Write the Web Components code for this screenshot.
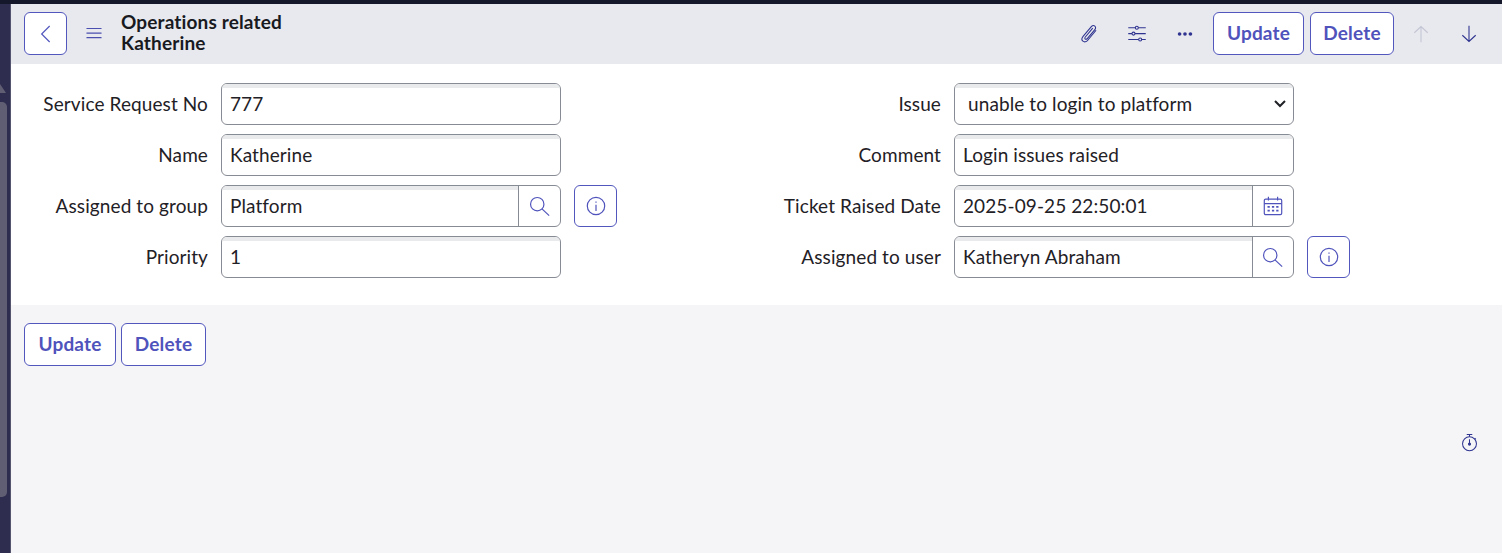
<!DOCTYPE html>
<html lang="en">
<head>
<meta charset="utf-8">
<title>Operations related Katherine</title>
<style>
  html, body { margin: 0; height: 100%; }
  body { font-family: Lato, "Liberation Sans", sans-serif; background: #f5f5f8; overflow: hidden; }
</style>
</head>
<body>
<app-shell>
  <form-header slot="header" heading="Operations related" sub="Katherine">
    <icon-button icon="clip"></icon-button>
    <icon-button icon="sliders"></icon-button>
    <icon-button icon="dots"></icon-button>
    <action-button class="first" style="width:91px">Update</action-button>
    <action-button class="second" style="width:84px">Delete</action-button>
    <icon-button icon="up" class="off"></icon-button>
    <icon-button icon="down"></icon-button>
  </form-header>
  <form-grid slot="form">
    <form-field label="Service Request No">777</form-field>
    <form-field label="Issue" type="select">unable to login to platform</form-field>
    <form-field label="Name">Katherine</form-field>
    <form-field label="Comment">Login issues raised</form-field>
    <form-field label="Assigned to group" addon="search" info>Platform</form-field>
    <form-field label="Ticket Raised Date" addon="calendar" class="narrow">2025-09-25 22:50:01</form-field>
    <form-field label="Priority">1</form-field>
    <form-field label="Assigned to user" addon="search" info class="narrow">Katheryn Abraham</form-field>
  </form-grid>
  <form-footer slot="footer">
    <action-button style="width:92px">Update</action-button>
    <action-button style="width:85px">Delete</action-button>
  </form-footer>
</app-shell>

<script>
// Iconos en linea, todos sobre una caja de 24x24
const ICONS = {
  back: '<path d="M16 3.250 7.250 12 16 20.750"/>',
  menu: '<path d="M3.800 6h16.400M3.800 11h16.400M3.800 16h16.400"/>',
  clip: '<path d="M20.500 7.500 10.500 19.500c-1.800 2.100-4.200 2.500-5.800 1.100-1.600-1.300-1.500-3.700.2-5.800L14.800 3.200c1.200-1.400 3-1.700 4.200-.7 1.200 1 1.200 2.800 0 4.200L9.900 17.500c-.7.800-1.700 1-2.400.5-.7-.6-.6-1.600.1-2.400L16.500 5"/>',
  sliders: '<path d="M1.500 4.500h8.500M13.500 4.500h9M1.500 11.500h4.500M9.500 11.500h13M1.500 18.500h12.500M17.500 18.500h5"/><circle cx="11.800" cy="4.500" r="1.800"/><circle cx="7.800" cy="11.500" r="1.800"/><circle cx="15.800" cy="18.500" r="1.800"/>',
  dots: '<circle cx="5.500" cy="12" r="2.200" fill="currentColor" stroke="none"/><circle cx="12" cy="12" r="2.200" fill="currentColor" stroke="none"/><circle cx="18.500" cy="12" r="2.200" fill="currentColor" stroke="none"/>',
  up: '<path d="M12 22V3M4 10.500 12 3l8 7.500"/>',
  down: '<path d="M12 2v19M4 13.500 12 21l8-7.500"/>',
  search: '<circle cx="9" cy="10" r="7.300"/><path d="m14.200 15.200 7.800 7.300"/>',
  info: '<circle cx="12" cy="12" r="9.500"/><path d="M12 10.500v7M12 7v1.500"/>',
  calendar: '<rect x="2.500" y="4.500" width="19" height="17" rx="1.500"/><path d="M2.500 9.500h19M7 2v4M17 2v4"/><path stroke-width="2" d="M6 13h2.500M10.800 13h2.500M15.500 13h2.500M6 17h2.500M10.800 17h2.500M15.500 17h2.500"/>',
  timer: '<circle cx="12" cy="13.500" r="8.800"/><path d="M8.500 1.800h7M12 1.800v3M12 8v5.500"/><circle cx="12" cy="14" r="1.300" fill="currentColor"/><path d="m18.500 6.500 1.500 1.500"/>'
};

function svg(name, size) {
  return `<svg width="${size}" height="${size}" viewBox="0 0 24 24" fill="none" stroke="currentColor" stroke-width="1.300">${ICONS[name]}</svg>`;
}

// Marco de la pagina: tira oscura a la izquierda y barra superior
class AppShell extends HTMLElement {
  constructor() {
    super();
    this.attachShadow({ mode: "open" }).innerHTML = `
      <style>
        :host { display: flex; height: 553px; flex-direction: column; }
        .top { height: 4px; background: #15172b; flex: none; }
        .body { display: flex; flex: 1; min-height: 0; position: relative; }
        .rail { width: 11px; box-sizing: border-box; flex: none; background: #2e2d50; border-right: 1px solid #55546f; padding-top: 98px; }
        .thumb { width: 7px; height: 395px; background: #605e73; border-radius: 0 5px 5px 0; }
        .peak { width: 0; height: 0; border-style: solid; border-width: 0 6px 9px 0; border-color: transparent transparent #605e73 transparent; position: absolute; top: 80px; left: 0; }
        main { flex: 1; min-width: 0; display: flex; flex-direction: column; }
        .timer { position: absolute; left: 1460px; top: 429px; color: #2f3490; line-height: 0; }
      </style>
      <div class="top"></div>
      <div class="body">
        <div class="rail"><div class="peak"></div><div class="thumb"></div></div>
        <main>
          <slot name="header"></slot>
          <slot name="form"></slot>
          <slot name="footer"></slot>
        </main>
        <div class="timer">${svg("timer", 19)}</div>
      </div>`;
  }
}

// Cabecera con titulo de dos lineas y acciones
class FormHeader extends HTMLElement {
  constructor() {
    super();
    this.attachShadow({ mode: "open" }).innerHTML = `
      <style>
        :host { display: flex; align-items: flex-start; height: 60px; background: #e8e9ee; padding: 8px 9px 0 13px; box-sizing: border-box; }
        .back { width: 43px; height: 43px; box-sizing: border-box; background: #fff; border: 1px solid #5257bd; border-radius: 6px; color: #5257bd; display: flex; align-items: center; justify-content: center; }
        .menu { width: 54px; height: 43px; display: flex; align-items: center; justify-content: center; color: #4a4fb0; }
        h1 { margin: -1px 0 0; font: 700 19px/21px Lato, sans-serif; letter-spacing: .15px; color: #181a1f; }
        .actions { margin-left: auto; display: flex; align-items: center; }
      </style>
      <div class="back">${svg("back", 22)}</div>
      <div class="menu">${svg("menu", 22)}</div>
      <h1></h1>
      <div class="actions"><slot></slot></div>`;
  }
  connectedCallback() {
    const h = this.shadowRoot.querySelector("h1");
    h.innerHTML = `${this.getAttribute("heading")}<br>${this.getAttribute("sub")}`;
  }
}

class IconButton extends HTMLElement {
  constructor() {
    super();
    this.attachShadow({ mode: "open" });
  }
  connectedCallback() {
    this.shadowRoot.innerHTML = `
      <style>
        :host { display: flex; width: 48px; height: 43px; align-items: center; justify-content: center; color: #2f3490; }
        :host(.off) { color: #c3c5d4; margin-left: 3px; }
      </style>
      ${svg(this.getAttribute("icon"), 20)}`;
  }
}

class ActionButton extends HTMLElement {
  constructor() {
    super();
    this.attachShadow({ mode: "open" }).innerHTML = `
      <style>
        :host { display: inline-flex; height: 43px; box-sizing: border-box; align-items: center; justify-content: center; padding-bottom: 2px; background: #fff; border: 1px solid #5257bd; border-radius: 6px; color: #4f53bb; font: 700 19px Lato, sans-serif; letter-spacing: .2px; }
        :host(.first) { margin-left: 4px; }
        :host(.second) { margin-left: 6px; }
      </style>
      <slot></slot>`;
  }
}

// Rejilla de dos columnas del formulario
class FormGrid extends HTMLElement {
  constructor() {
    super();
    this.attachShadow({ mode: "open" }).innerHTML = `
      <style>
        :host { display: grid; grid-template-columns: 733px 1fr; row-gap: 9px; background: #fff; height: 241px; box-sizing: border-box; padding-top: 19px; align-content: start; }
      </style>
      <slot></slot>`;
  }
}

class FormField extends HTMLElement {
  constructor() {
    super();
    this.attachShadow({ mode: "open" });
  }
  connectedCallback() {
    const addon = this.getAttribute("addon");
    const isSelect = this.getAttribute("type") === "select";
    this.shadowRoot.innerHTML = `
      <style>
        :host { display: flex; align-items: center; height: 42px; font: 400 19px/24px Lato, sans-serif; letter-spacing: .1px; color: #1f2126; }
        label { width: 197px; text-align: right; flex: none; margin-right: 13px; padding-bottom: 1px; }
        .box { width: 340px; height: 42px; box-sizing: border-box; flex: none; display: flex; background: #fff; border: 1px solid #878b94; border-radius: 6px; overflow: hidden; }
        .value { flex: 1; min-width: 0; padding: 0 0 1px 8px; display: flex; align-items: center; box-shadow: inset 0 4px 0 #e9eaeb; white-space: nowrap; }
        .select { padding-left: 13px; justify-content: space-between; padding-right: 7px; }
        .addon { width: 41px; flex: none; border-left: 1px solid #878b94; display: flex; align-items: center; justify-content: center; color: #4f53bb; }
        :host(.narrow) .addon { width: 40px; }
        .info { width: 43px; height: 42px; box-sizing: border-box; margin-left: 13px; border: 1px solid #5257bd; border-radius: 6px; background: #fff; color: #4f53bb; display: flex; align-items: center; justify-content: center; }
      </style>
      <label>${this.getAttribute("label")}</label>
      <div class="box">
        <div class="value ${isSelect ? "select" : ""}"><span><slot></slot></span>${isSelect ? '<svg width="12" height="8" viewBox="0 0 12 8" fill="none" stroke="#1f2126" stroke-width="2"><path d="m1 1 5 5 5-5"/></svg>' : ""}</div>
        ${addon ? `<div class="addon">${svg(addon, 22)}</div>` : ""}
      </div>
      ${this.hasAttribute("info") ? `<div class="info">${svg("info", 22)}</div>` : ""}`;
  }
}

class FormFooter extends HTMLElement {
  constructor() {
    super();
    this.attachShadow({ mode: "open" }).innerHTML = `
      <style>
        :host { display: flex; gap: 5px; padding: 18px 13px; }
      </style>
      <slot></slot>`;
  }
}

customElements.define("app-shell", AppShell);
customElements.define("form-header", FormHeader);
customElements.define("icon-button", IconButton);
customElements.define("action-button", ActionButton);
customElements.define("form-grid", FormGrid);
customElements.define("form-field", FormField);
customElements.define("form-footer", FormFooter);
</script>
</body>
</html>
